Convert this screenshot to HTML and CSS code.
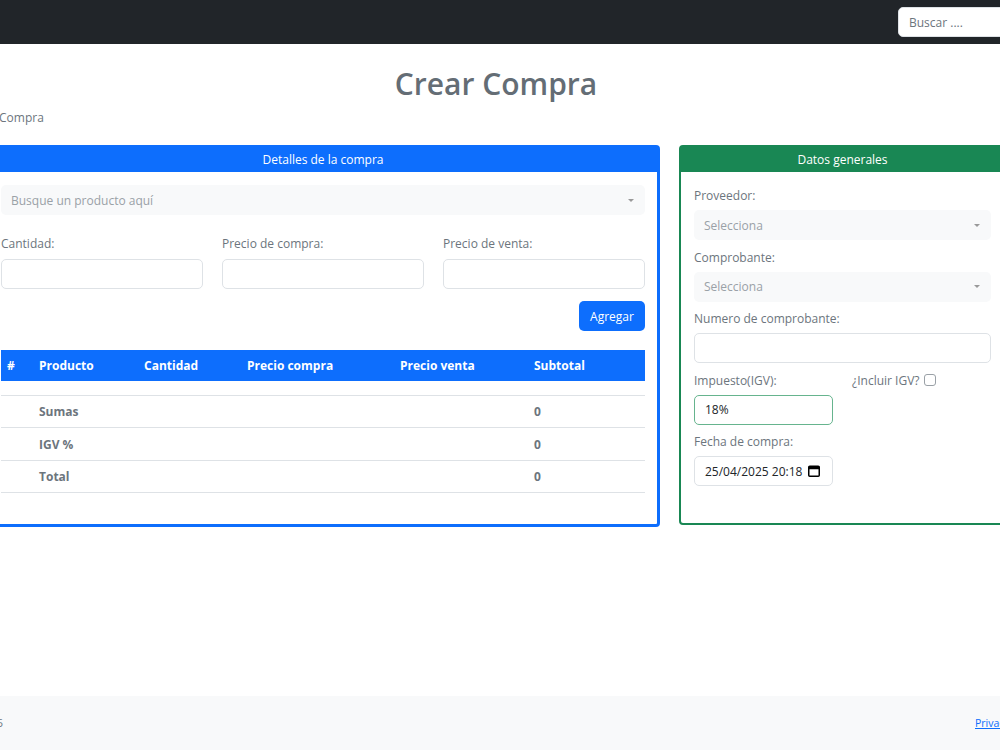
FILE: index.html
```html
<!DOCTYPE html>
<html lang="es">
<head>
  <meta charset="UTF-8" />
  <meta name="viewport" content="width=device-width, initial-scale=1.0"/>
  <title>Crear Compra</title>
  <link rel="stylesheet" href="styles.css">
</head>
<body>
  <nav class="topnav">
    <input class="search" type="text" placeholder="Buscar ....">
  </nav>

  <main>
    <h1 class="title">Crear Compra</h1>
    <div class="breadcrumb">Compra</div>

    <div class="cards">
      <section class="card card-blue">
        <div class="card-header">Detalles de la compra</div>
        <div class="card-body">
          <div class="select-box">
            <span class="placeholder">Busque un producto aquí</span>
            <span class="caret"></span>
          </div>

          <div class="grid3">
            <div>
              <label>Cantidad:</label>
              <div class="input"></div>
            </div>
            <div>
              <label>Precio de compra:</label>
              <div class="input"></div>
            </div>
            <div>
              <label>Precio de venta:</label>
              <div class="input"></div>
            </div>
          </div>

          <div class="actions">
            <button class="btn">Agregar</button>
          </div>

          <table class="detail-table">
            <colgroup>
              <col style="width:32px"><col style="width:105px"><col style="width:103px">
              <col style="width:153px"><col style="width:134px"><col>
            </colgroup>
            <thead>
              <tr>
                <th>#</th>
                <th>Producto</th>
                <th>Cantidad</th>
                <th>Precio compra</th>
                <th>Precio venta</th>
                <th>Subtotal</th>
              </tr>
            </thead>
            <tbody>
              <tr class="empty"><td colspan="6"></td></tr>
            </tbody>
            <tfoot>
              <tr><td></td><td>Sumas</td><td></td><td></td><td></td><td>0</td></tr>
              <tr class="mid"><td></td><td>IGV %</td><td></td><td></td><td></td><td>0</td></tr>
              <tr><td></td><td>Total</td><td></td><td></td><td></td><td>0</td></tr>
            </tfoot>
          </table>
        </div>
      </section>

      <section class="card card-green">
        <div class="card-header">Datos generales</div>
        <div class="card-body">
          <div class="field">
            <label>Proveedor:</label>
            <div class="select-box">
              <span class="placeholder">Selecciona</span>
              <span class="caret"></span>
            </div>
          </div>
          <div class="field">
            <label>Comprobante:</label>
            <div class="select-box">
              <span class="placeholder">Selecciona</span>
              <span class="caret"></span>
            </div>
          </div>
          <div class="field">
            <label>Numero de comprobante:</label>
            <div class="input"></div>
          </div>
          <div class="grid2 field">
            <div>
              <label>Impuesto(IGV):</label>
              <div class="input input-ok">18%</div>
            </div>
            <div class="check-row">
              <label>¿Incluir IGV?</label>
              <span class="checkbox"></span>
            </div>
          </div>
          <div class="grid2">
            <div>
              <label>Fecha de compra:</label>
              <div class="input input-date">
                <span>25/04/2025 20:18</span>
                <svg width="12" height="12" viewBox="0 0 12 12">
                  <rect x="0.75" y="1.25" width="10.5" height="10" rx="1" fill="none" stroke="#000" stroke-width="1.5"/>
                  <rect x="0.75" y="1.25" width="10.5" height="3" fill="#000"/>
                </svg>
              </div>
            </div>
          </div>
        </div>
      </section>
    </div>
  </main>

  <footer class="footer">
    <div class="footer-left">Copyright &copy; Your Website 2025</div>
    <div class="footer-right"><a href="#">Privacy Policy</a> &middot; <a href="#">Terms &amp; Conditions</a></div>
  </footer>
</body>
</html>
```

FILE: styles.css
```css
body {
  margin: 0;
  font-family: 'Open Sans', 'Noto Sans', sans-serif;
  font-size: 12px;
  color: #212529;
  background: #fff;
  overflow: hidden;
  min-height: 100vh;
  display: flex;
  flex-direction: column;
}
.topnav {
  height: 44px;
  background: #212529;
  display: flex;
  align-items: center;
  justify-content: flex-end;
  overflow: hidden;
}
.search {
  width: 130px;
  height: 30px;
  box-sizing: border-box;
  margin-right: -28px;
  border: 1px solid #dee2e6;
  border-radius: 5px;
  padding: 0 10px;
  font-family: inherit;
  font-size: 12px;
  background: #fff;
}
.search::placeholder { color: #6c757d; }
main {
  flex: 1;
}
.title {
  margin: 21px 0 0;
  padding-right: 8px;
  text-align: center;
  font-size: 30px;
  line-height: 38px;
  font-weight: 600;
  color: #646d75;
}
.breadcrumb {
  margin: 5px 0 0 -1px;
  line-height: 20px;
  color: #6c757d;
}
.cards {
  display: flex;
  gap: 19px;
  margin: 17px 0 0 -14px;
  align-items: flex-start;
}
.card {
  flex-shrink: 0;
  box-sizing: border-box;
  border-radius: 4px;
  background: #fff;
}
.card-blue {
  width: 674px;
  border: 3px solid #0d6efd;
}
.card-green {
  width: 327px;
  border: 2px solid #198754;
}
.card-header {
  color: #fff;
  text-align: center;
  line-height: 24px;
}
.card-blue .card-header { background: #0d6efd; }
.card-green .card-header { background: #198754; line-height: 25px; }
.card-blue .card-body { padding: 13px 12px 12px; }
.card-green .card-body { padding: 14px 13px 37px; }
label {
  display: block;
  line-height: 19px;
  margin-bottom: 6px;
  color: #6c757d;
}
.card-green label { margin-bottom: 5px; }
.select-box {
  height: 30px;
  background: #f8f9fa;
  border-radius: 5px;
  display: flex;
  align-items: center;
  padding: 0 10px;
  box-sizing: border-box;
}
.placeholder {
  flex: 1;
  color: #9aa1a7;
}
.caret {
  width: 0;
  height: 0;
  border-left: 3px solid transparent;
  border-right: 3px solid transparent;
  border-top: 3px solid #999;
  margin-right: 1px;
}
.input {
  height: 30px;
  box-sizing: border-box;
  border: 1px solid #dee2e6;
  border-radius: 5px;
  background: #fff;
  display: flex;
  align-items: center;
  padding: 0 10px;
}
.grid3 {
  display: grid;
  grid-template-columns: 1fr 1fr 1fr;
  gap: 19px;
  margin-top: 19px;
}
.actions {
  display: flex;
  justify-content: flex-end;
  margin-top: 12px;
}
.btn {
  height: 30px;
  width: 66px;
  padding: 0;
  border: none;
  border-radius: 5px;
  background: #0d6efd;
  color: #fff;
  font-family: inherit;
  font-size: 12px;
}
.detail-table {
  width: 100%;
  margin-top: 19px;
  margin-bottom: 19px;
  border-collapse: collapse;
  table-layout: fixed;
}
.detail-table th {
  background: #0d6efd;
  color: #fff;
  font-weight: 700;
  text-align: left;
  height: 31px;
  padding: 0 6px;
}
.detail-table .empty td {
  height: 14px;
  padding: 0;
  border-bottom: 1px solid #dee2e6;
}
.detail-table tfoot td {
  height: 31px;
  padding: 0 6px;
  font-weight: 700;
  color: #6c757d;
  border-bottom: 1px solid #dee2e6;
}
.detail-table tfoot .mid td { height: 32px; }
.field { margin-bottom: 7.5px; }
.grid2 {
  display: grid;
  grid-template-columns: 139px 139px;
  gap: 19px;
}
.check-row {
  display: flex;
  align-items: flex-start;
  gap: 4px;
}
.check-row label { margin: 0; }
.checkbox {
  width: 12px;
  height: 12px;
  margin-top: 3px;
  box-sizing: border-box;
  border: 1px solid #9aa1a7;
  border-radius: 3px;
  background: #fff;
}
.input-ok {
  border-color: #66b48e;
}
.input-date {
  justify-content: space-between;
  padding-right: 12px;
}
.footer {
  height: 54px;
  background: #f8f9fa;
  display: flex;
  align-items: center;
  justify-content: space-between;
  font-size: 10.5px;
  color: #6c757d;
  overflow: hidden;
  white-space: nowrap;
}
.footer-left {
  width: 200px;
  margin-left: -197px;
  text-align: right;
}
.footer-right {
  margin-right: -200px;
  width: 225px;
}
.footer a { color: #0d6efd; }
```
